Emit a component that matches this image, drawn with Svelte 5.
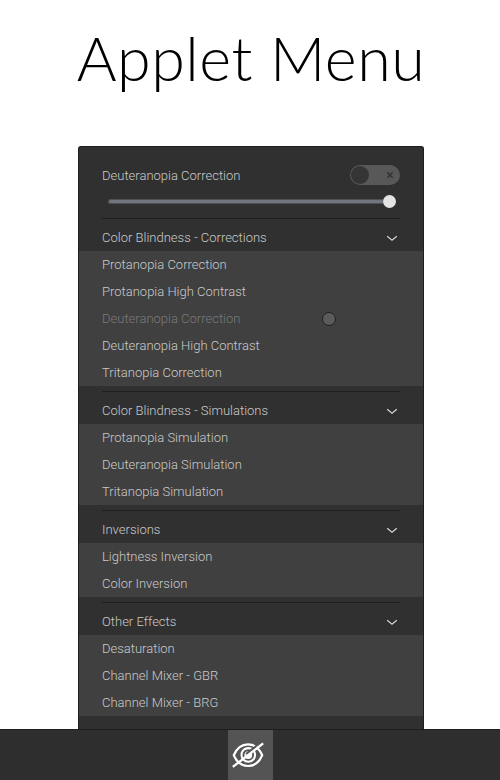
<script>
  const sections = [
    {
      title: 'Color Blindness - Corrections',
      items: [
        'Protanopia Correction',
        'Protanopia High Contrast',
        'Deuteranopia Correction',
        'Deuteranopia High Contrast',
        'Tritanopia Correction',
      ],
    },
    {
      title: 'Color Blindness - Simulations',
      items: ['Protanopia Simulation', 'Deuteranopia Simulation', 'Tritanopia Simulation'],
    },
    { title: 'Inversions', items: ['Lightness Inversion', 'Color Inversion'] },
    { title: 'Other Effects', items: ['Desaturation', 'Channel Mixer - GBR', 'Channel Mixer - BRG'] },
  ];
  const selected = 'Deuteranopia Correction';
</script>

<div class="page">
  <h1>Applet Menu</h1>

  <div class="menu">
    <div class="top">
      <div class="current">
        <span>{selected}</span>
        <div class="switch">
          <div class="knob"></div>
          <svg width="8" height="8" viewBox="0 0 8 8"><path d="M1.3 1.3 6.7 6.7M6.7 1.3 1.3 6.7" /></svg>
        </div>
      </div>
      <div class="slider">
        <div class="track"></div>
        <div class="handle"></div>
      </div>
    </div>

    {#each sections as section}
      <div class="separator"></div>
      <div class="header">
        <span>{section.title}</span>
        <svg width="12" height="8" viewBox="0 0 12 8"><path d="M1.200 2.200 6 6.200 10.800 2.200" /></svg>
      </div>
      <div class="list">
        {#each section.items as item}
          <div class="item" class:active={item === selected}>
            <span>{item}</span>
            {#if item === selected}<i class="dot"></i>{/if}
          </div>
        {/each}
      </div>
    {/each}
  </div>

  <div class="panel">
    <div class="applet">
      <svg width="34" height="28" viewBox="0 0 34 28">
        <path class="eye" d="M2.800 14.200C9 -.2 25 -.2 31.200 14.200C25 28.600 9 28.600 2.800 14.200Z" />
        <circle class="iris" cx="17.300" cy="13.900" r="6.800" />
        <circle class="pupil" cx="17.300" cy="14.100" r="3.900" />
        <path class="gap" d="M15.500 13.600 26 5.400" />
        <path class="slash" d="M1.800 25.900 32.200 2.400" />
      </svg>
    </div>
  </div>
</div>

<style>
  :global(body) {
    margin: 0;
    background: #fff;
  }
  .page {
    width: 500px;
    height: 780px;
    display: flex;
    flex-direction: column;
    align-items: center;
    overflow: hidden;
    background: #fff;
    color: #cacaca;
    font: 300 13px/27px Roboto, sans-serif;
  }
  h1 {
    margin: 0;
    height: 146px;
    padding: 22px 0 0 2px;
    box-sizing: border-box;
    color: #000;
    font: 300 61px/72px Lato, sans-serif;
    letter-spacing: 0.5px;
    white-space: nowrap;
  }
  .menu {
    width: 346px;
    height: 583px;
    flex: none;
    box-sizing: border-box;
    margin-left: 2px;
    border: 1px solid #1e1e1e;
    border-bottom: 0;
    border-radius: 3px 3px 0 0;
    background: #303030;
  }
  .top {
    height: 66px;
    padding: 14px 23px 0;
    box-sizing: border-box;
  }
  .current {
    height: 28px;
    display: flex;
    align-items: center;
    justify-content: space-between;
  }
  .switch {
    width: 50px;
    height: 20px;
    padding: 0 6px 0 1px;
    box-sizing: border-box;
    border-radius: 10px;
    background: #585858;
    display: flex;
    align-items: center;
    justify-content: space-between;
  }
  .knob {
    width: 18px;
    height: 18px;
    border-radius: 50%;
    background: #353535;
  }
  .switch path {
    stroke: #333;
    stroke-width: 1.5;
  }
  svg {
    display: block;
    fill: none;
  }
  .slider {
    height: 24px;
    padding: 0 4px 0 6px;
    display: flex;
    align-items: center;
  }
  .track {
    flex: 1;
    height: 3px;
    border: 1px solid #505056;
    border-right: 0;
    border-radius: 3px 0 0 3px;
    background: #72747e;
  }
  .handle {
    width: 13px;
    height: 13px;
    border-radius: 50%;
    background: #e4e4e4;
  }
  .separator {
    height: 1px;
    margin: 5px 23px;
    background: #1f1f1f;
  }
  .header {
    height: 27px;
    padding: 0 25px 0 23px;
    display: flex;
    align-items: center;
    justify-content: space-between;
  }
  .header path {
    stroke: #d4d4d4;
    stroke-width: 1.200;
  }
  .list {
    background: #404040;
  }
  .item {
    height: 27px;
    padding: 0 87px 0 23px;
    display: flex;
    align-items: center;
    justify-content: space-between;
  }
  .active {
    color: #7a7a7a;
  }
  .dot {
    width: 12px;
    height: 12px;
    border: 1px solid #202020;
    border-radius: 50%;
    background: #5b5b5b;
  }
  .panel {
    width: 500px;
    height: 51px;
    flex: none;
    box-sizing: border-box;
    border-top: 1px solid #1e1e1e;
    background: #2e2e2e;
    display: flex;
    justify-content: center;
  }
  .applet {
    width: 45px;
    height: 50px;
    display: flex;
    align-items: center;
    justify-content: center;
    box-sizing: border-box;
    padding-right: 5px;
    background: #545454;
  }
  .eye {
    stroke: #fff;
    stroke-width: 2.200;
  }
  .iris {
    stroke: #fff;
    stroke-width: 2.100;
  }
  .pupil {
    fill: #fff;
  }
  .gap {
    stroke: #545454;
    stroke-width: 3.600;
  }
  .slash {
    stroke: #fff;
    stroke-width: 2.300;
  }
</style>
